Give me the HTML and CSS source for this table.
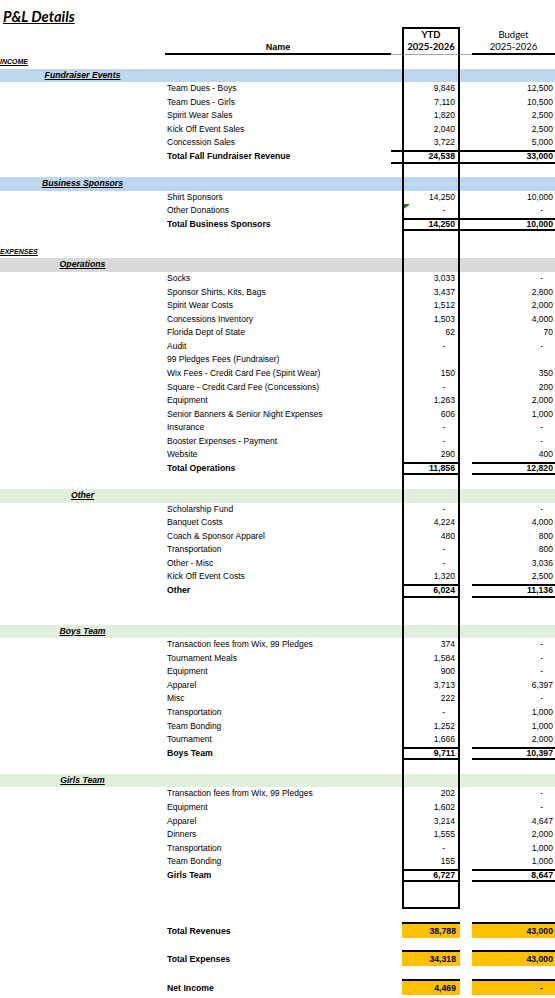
FILE: index.html
```html
<!DOCTYPE html>
<html lang="en">
<head>
    <meta charset="UTF-8">
    <meta name="viewport" content="width=device-width, initial-scale=1.0">
    <title>P&amp;L Details</title>
    <link rel="stylesheet" href="styles.css">
</head>
<body>
    <div class="title"><span>P&amp;L Details</span></div>

    <div class="head">
        <div class="h-name">Name</div>
        <div class="h-gap"></div>
        <div class="h-ytd">YTD<br>2025-2026</div>
        <div class="h-gap2"></div>
        <div class="h-bud">Budget<br>2025-2026</div>
    </div>

    <!-- income -->
    <div class="row"><span class="cat">INCOME</span><span class="ytd"></span></div>
    <div class="row band blue"><span class="sec">Fundraiser Events</span><span class="ytd"></span></div>
    <div class="row"><span class="name">Team Dues - Boys</span><span class="ytd">9,846</span><span class="bud">12,500</span></div>
    <div class="row"><span class="name">Team Dues - Girls</span><span class="ytd">7,110</span><span class="bud">10,500</span></div>
    <div class="row"><span class="name">Spirit Wear Sales</span><span class="ytd">1,820</span><span class="bud">2,500</span></div>
    <div class="row"><span class="name">Kick Off Event Sales</span><span class="ytd">2,040</span><span class="bud">2,500</span></div>
    <div class="row"><span class="name">Concession Sales</span><span class="ytd">3,722</span><span class="bud">5,000</span></div>
    <div class="row total"><span class="name">Total Fall Fundraiser Revenue</span><span class="g1"></span><span class="ytd">24,538</span><span class="g2"></span><span class="bud">33,000</span></div>
    <div class="row"><span class="ytd"></span></div>
    <div class="row band blue"><span class="sec">Business Sponsors</span><span class="ytd"></span></div>
    <div class="row"><span class="name">Shirt Sponsors</span><span class="ytd">14,250</span><span class="bud">10,000</span></div>
    <div class="row"><span class="name">Other Donations</span><span class="ytd flag"><i class="z">-</i></span><span class="bud"><i class="z">-</i></span></div>
    <div class="row total"><span class="name">Total Business Sponsors</span><span class="ytd">14,250</span><span class="g2"></span><span class="bud">10,000</span></div>
    <div class="row"><span class="ytd"></span></div>

    <!-- expenses -->
    <div class="row"><span class="cat">EXPENSES</span><span class="ytd"></span></div>
    <div class="row band gray"><span class="sec">Operations</span><span class="ytd"></span></div>
    <div class="row"><span class="name">Socks</span><span class="ytd">3,033</span><span class="bud"><i class="z">-</i></span></div>
    <div class="row"><span class="name">Sponsor Shirts, Kits, Bags</span><span class="ytd">3,437</span><span class="bud">2,800</span></div>
    <div class="row"><span class="name">Spirit Wear Costs</span><span class="ytd">1,512</span><span class="bud">2,000</span></div>
    <div class="row"><span class="name">Concessions Inventory</span><span class="ytd">1,503</span><span class="bud">4,000</span></div>
    <div class="row"><span class="name">Florida Dept of State</span><span class="ytd">62</span><span class="bud">70</span></div>
    <div class="row"><span class="name">Audit</span><span class="ytd"><i class="z">-</i></span><span class="bud"><i class="z">-</i></span></div>
    <div class="row"><span class="name">99 Pledges Fees (Fundraiser)</span><span class="ytd"></span></div>
    <div class="row"><span class="name">Wix Fees - Credit Card Fee (Spirit Wear)</span><span class="ytd">150</span><span class="bud">350</span></div>
    <div class="row"><span class="name">Square - Credit Card Fee (Concessions)</span><span class="ytd"><i class="z">-</i></span><span class="bud">200</span></div>
    <div class="row"><span class="name">Equipment</span><span class="ytd">1,263</span><span class="bud">2,000</span></div>
    <div class="row"><span class="name">Senior Banners &amp; Senior Night Expenses</span><span class="ytd">606</span><span class="bud">1,000</span></div>
    <div class="row"><span class="name">Insurance</span><span class="ytd"><i class="z">-</i></span><span class="bud"><i class="z">-</i></span></div>
    <div class="row"><span class="name">Booster Expenses - Payment</span><span class="ytd"><i class="z">-</i></span><span class="bud"><i class="z">-</i></span></div>
    <div class="row"><span class="name">Website</span><span class="ytd">290</span><span class="bud">400</span></div>
    <div class="row total"><span class="name">Total Operations</span><span class="ytd">11,856</span><span class="bud">12,820</span></div>
    <div class="row"><span class="ytd"></span></div>

    <div class="row band green"><span class="sec">Other</span><span class="ytd"></span></div>
    <div class="row"><span class="name">Scholarship Fund</span><span class="ytd"><i class="z">-</i></span><span class="bud"><i class="z">-</i></span></div>
    <div class="row"><span class="name">Banquet Costs</span><span class="ytd">4,224</span><span class="bud">4,000</span></div>
    <div class="row"><span class="name">Coach &amp; Sponsor Apparel</span><span class="ytd">480</span><span class="bud">800</span></div>
    <div class="row"><span class="name">Transportation</span><span class="ytd"><i class="z">-</i></span><span class="bud">800</span></div>
    <div class="row"><span class="name">Other - Misc</span><span class="ytd"><i class="z">-</i></span><span class="bud">3,036</span></div>
    <div class="row"><span class="name">Kick Off Event Costs</span><span class="ytd">1,320</span><span class="bud">2,500</span></div>
    <div class="row total"><span class="name">Other</span><span class="ytd">6,024</span><span class="bud">11,136</span></div>
    <div class="row"><span class="ytd"></span></div>
    <div class="row"><span class="ytd"></span></div>

    <div class="row band green"><span class="sec">Boys Team</span><span class="ytd"></span></div>
    <div class="row"><span class="name">Transaction fees from Wix, 99 Pledges</span><span class="ytd">374</span><span class="bud"><i class="z">-</i></span></div>
    <div class="row"><span class="name">Tournament Meals</span><span class="ytd">1,584</span><span class="bud"><i class="z">-</i></span></div>
    <div class="row"><span class="name">Equipment</span><span class="ytd">900</span><span class="bud"><i class="z">-</i></span></div>
    <div class="row"><span class="name">Apparel</span><span class="ytd">3,713</span><span class="bud">6,397</span></div>
    <div class="row"><span class="name">Misc</span><span class="ytd">222</span><span class="bud"><i class="z">-</i></span></div>
    <div class="row"><span class="name">Transportation</span><span class="ytd"><i class="z">-</i></span><span class="bud">1,000</span></div>
    <div class="row"><span class="name">Team Bonding</span><span class="ytd">1,252</span><span class="bud">1,000</span></div>
    <div class="row"><span class="name">Tournament</span><span class="ytd">1,666</span><span class="bud">2,000</span></div>
    <div class="row total"><span class="name">Boys Team</span><span class="ytd">9,711</span><span class="bud">10,397</span></div>
    <div class="row"><span class="ytd"></span></div>

    <div class="row band green"><span class="sec">Girls Team</span><span class="ytd"></span></div>
    <div class="row"><span class="name">Transaction fees from Wix, 99 Pledges</span><span class="ytd">202</span><span class="bud"><i class="z">-</i></span></div>
    <div class="row"><span class="name">Equipment</span><span class="ytd">1,602</span><span class="bud"><i class="z">-</i></span></div>
    <div class="row"><span class="name">Apparel</span><span class="ytd">3,214</span><span class="bud">4,647</span></div>
    <div class="row"><span class="name">Dinners</span><span class="ytd">1,555</span><span class="bud">2,000</span></div>
    <div class="row"><span class="name">Transportation</span><span class="ytd"><i class="z">-</i></span><span class="bud">1,000</span></div>
    <div class="row"><span class="name">Team Bonding</span><span class="ytd">155</span><span class="bud">1,000</span></div>
    <div class="row total"><span class="name">Girls Team</span><span class="ytd">6,727</span><span class="bud">8,647</span></div>
    <div class="row"><span class="ytd"></span></div>
    <div class="row last"><span class="ytd"></span></div>

    <!-- summary -->
    <div class="sum"><span class="name">Total Revenues</span><span class="ytd">38,788</span><span class="bud">43,000</span></div>
    <div class="sum"><span class="name">Total Expenses</span><span class="ytd">34,318</span><span class="bud">43,000</span></div>
    <div class="sum"><span class="name">Net Income</span><span class="ytd">4,469</span><span class="bud"><i class="z">-</i></span></div>
</body>
</html>
```

FILE: styles.css
```css
body {
    margin: 0;
    width: 555px;
    font-family: "Liberation Sans", Arial, sans-serif;
    font-size: 8.5px;
    color: #000;
    background-color: #fff;
}
.title {
    height: 27px;
    box-sizing: border-box;
    padding: 7px 0 0 3px;
    font-family: Lato, "Open Sans", sans-serif;
    font-weight: 700;
    font-style: italic;
    font-size: 14.7px;
    line-height: 18px;
}
.title span {
    text-decoration: underline;
    text-decoration-thickness: 1px;
}

/* columns: section | name | gap | ytd | gap | budget */
.head,
.row,
.sum {
    display: grid;
    grid-template-columns: 165px 226px 11px 58px 12px 83px;
}
.head {
    height: 28px;
    font-family: Lato, "Open Sans", sans-serif;
    font-size: 9.5px;
    line-height: 12px;
    text-align: center;
}
.head > div {
    box-sizing: border-box;
    grid-row: 1;
}
.h-name {
    grid-column: 2;
    padding-top: 14px;
    font-family: "Liberation Sans", Arial, sans-serif;
    font-size: 9px;
    font-weight: 700;
    border-bottom: 2px solid #000;
}
.h-gap {
    grid-column: 3;
    border-bottom: 1px solid #a6a6a6;
}
.h-ytd {
    grid-column: 4;
    font-weight: 700;
    border: 2px solid #000;
    border-bottom: 1px solid #a6a6a6;
}
.h-gap2 {
    grid-column: 5;
    border-bottom: 1px solid #a6a6a6;
}
.h-bud {
    grid-column: 6;
    padding-top: 2px;
    border-bottom: 2px solid #000;
}

.row {
    height: 13.57px;
    line-height: 13.57px;
}
.row > *,
.sum > * {
    grid-row: 1;
    box-sizing: border-box;
    white-space: nowrap;
}
.cat {
    grid-column: 1;
    font-size: 7px;
    font-weight: 700;
    font-style: italic;
    text-decoration: underline;
}
.sec {
    grid-column: 1;
    text-align: center;
    font-size: 8.7px;
    font-weight: 700;
    font-style: italic;
    text-decoration: underline;
}
.name {
    grid-column: 2;
    padding-left: 2px;
}
.g1 { grid-column: 3; }
.g2 { grid-column: 5; }
.ytd {
    grid-column: 4;
    text-align: right;
    padding-right: 3px;
    border-left: 2px solid #000;
    border-right: 2px solid #000;
}
.bud {
    grid-column: 6;
    text-align: right;
    padding-right: 2px;
}
.z {
    font-style: normal;
    padding-right: 10px;
}

.band.blue { background-color: #bdd7ee; }
.band.gray { background-color: #d9d9d9; }
.band.green { background-color: #e2efda; }

.total {
    font-weight: 700;
    font-size: 8.7px;
}
.total .ytd,
.total .bud,
.total .g1,
.total .g2 {
    border-top: 2px solid #000;
    border-bottom: 2px solid #000;
    line-height: 9.57px;
}
.last .ytd {
    border-bottom: 2px solid #000;
}

.flag {
    position: relative;
}
.flag::before {
    content: "";
    position: absolute;
    left: 0;
    top: 0;
    border-top: 5px solid #1f7a1f;
    border-right: 6px solid transparent;
}

.sum {
    height: 16px;
    margin-top: 12.5px;
    line-height: 14px;
    font-size: 8.7px;
    font-weight: 700;
}
.sum .name {
    padding-top: 2px;
}
.sum .ytd,
.sum .bud {
    background-color: #ffc000;
    border: 0;
    border-top: 2px solid #000;
}
.sum .ytd { padding-right: 4px; }
```
